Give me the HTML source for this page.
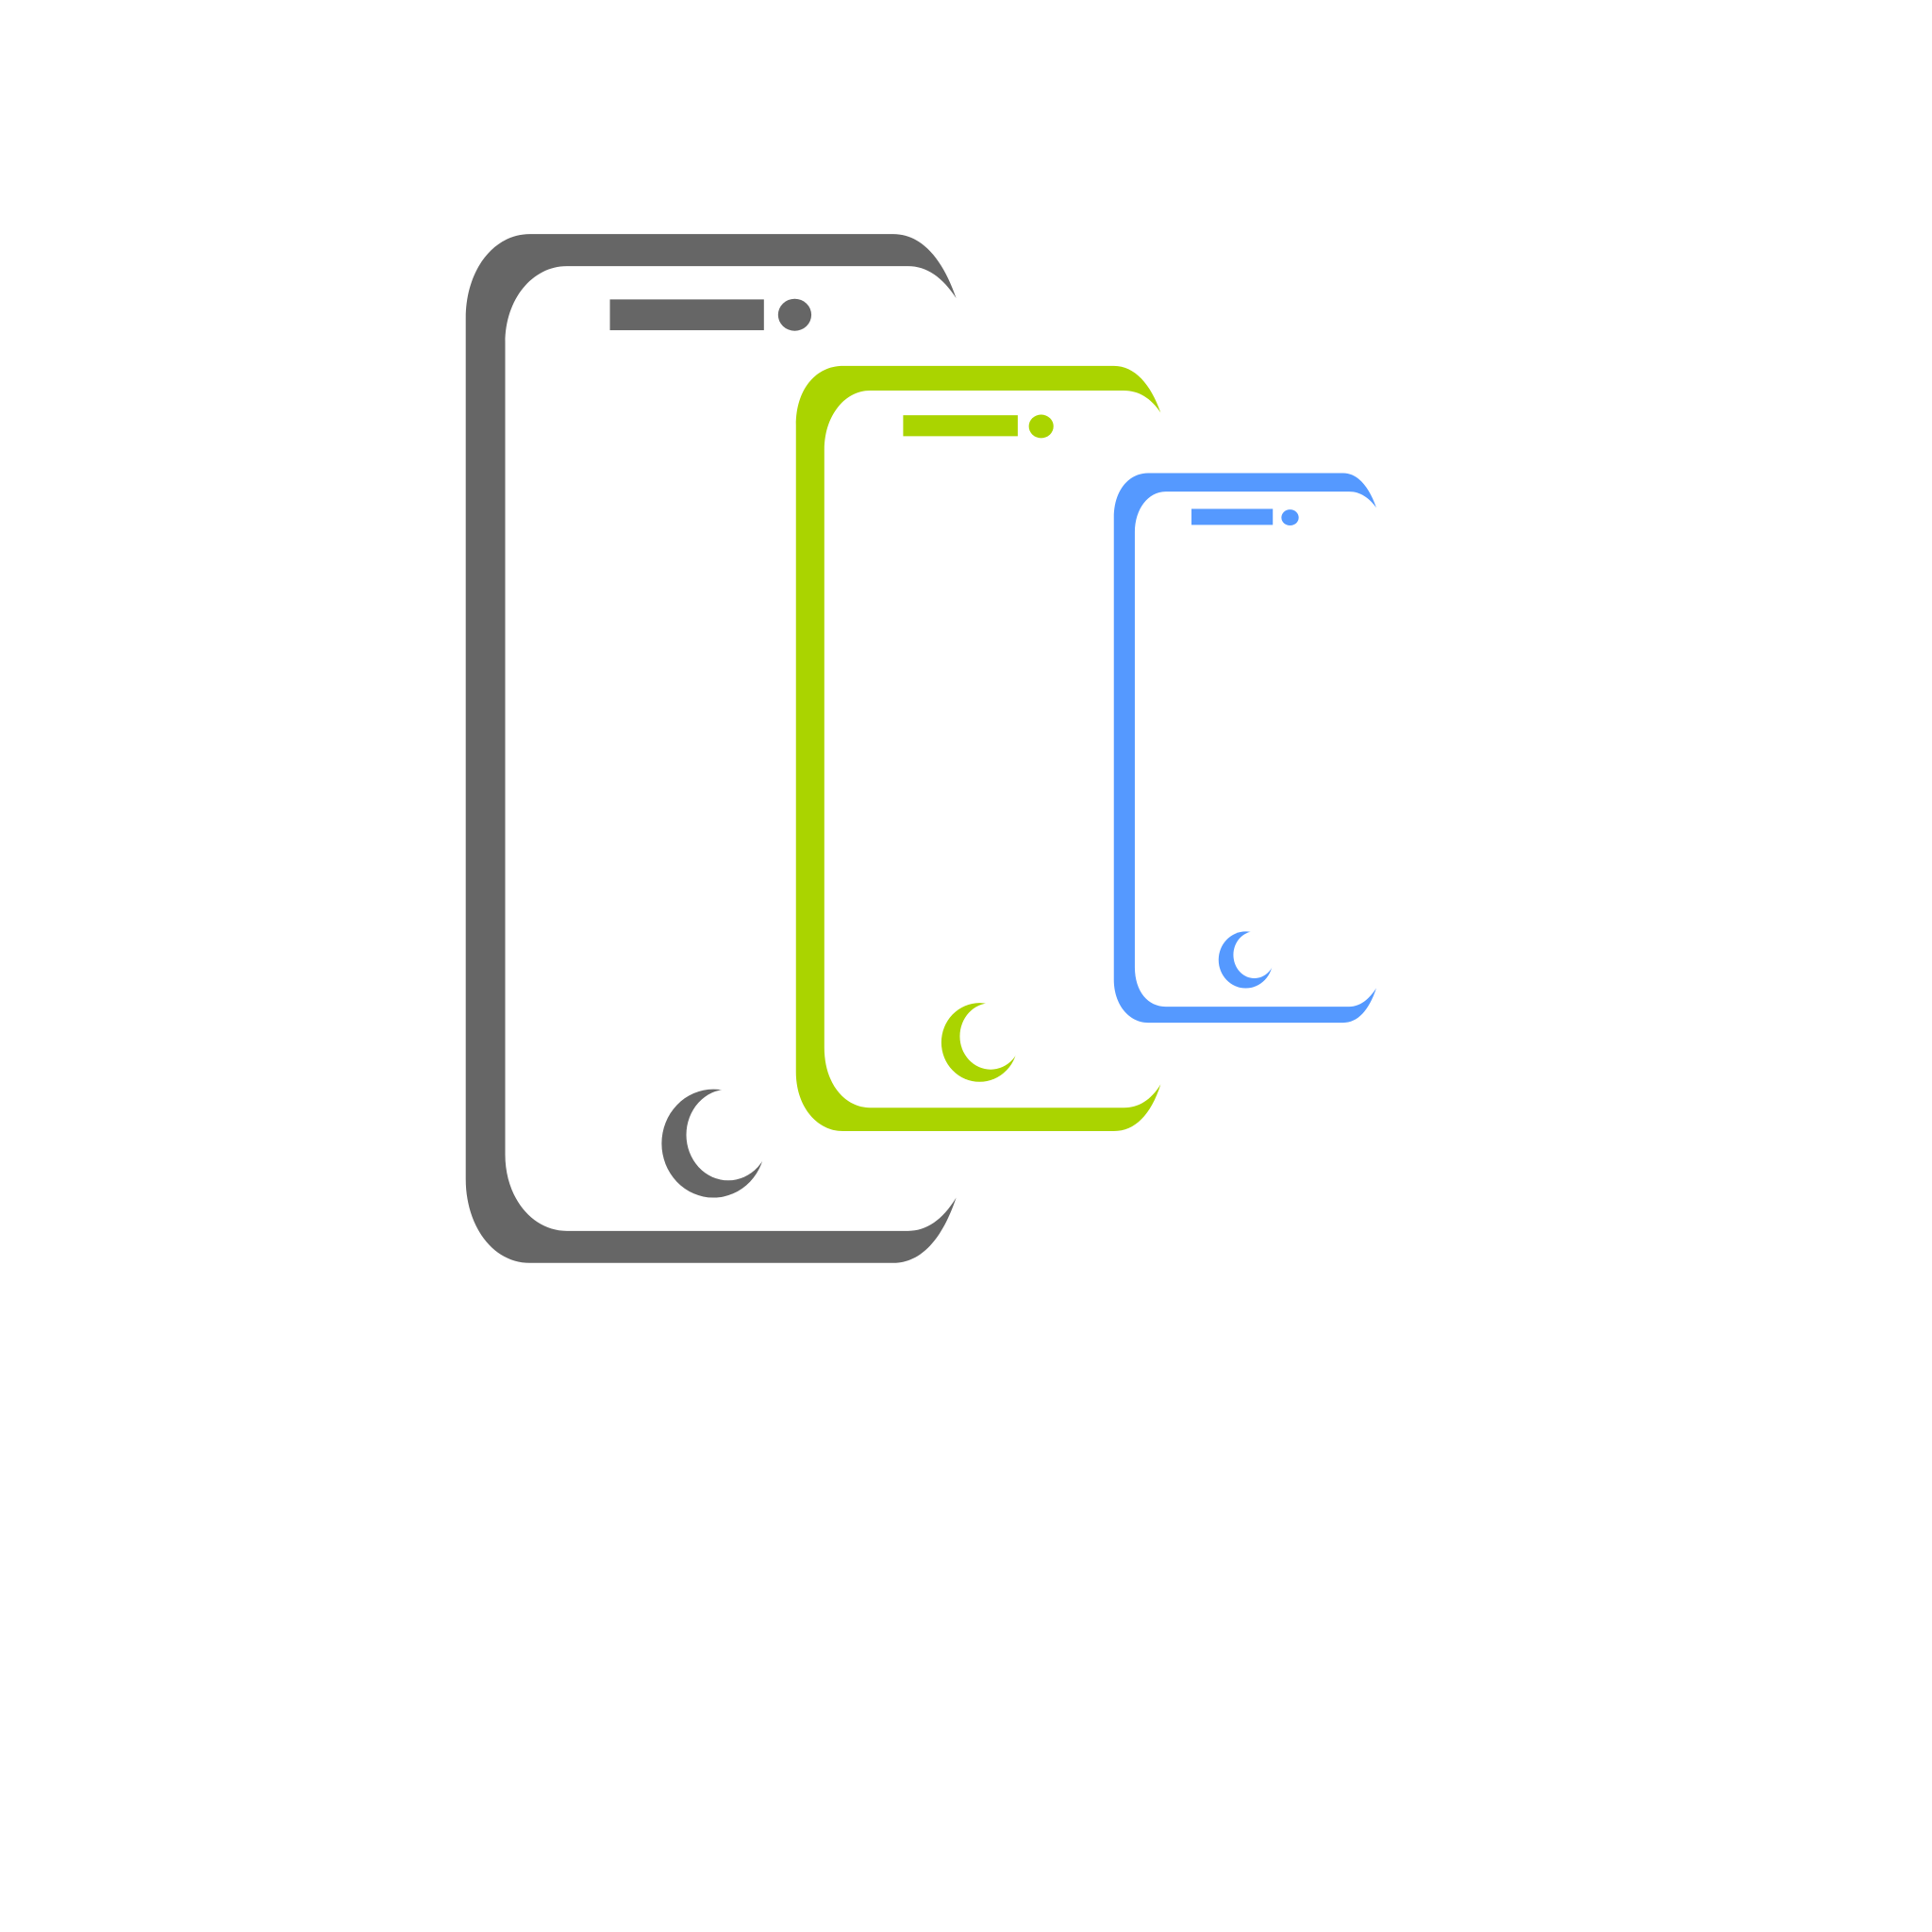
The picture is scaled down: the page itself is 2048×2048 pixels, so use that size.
<!DOCTYPE html>
<html><head><style>html,body{margin:0;padding:0;background:#fff;}svg{display:block}</style></head>
<body>
<svg width="2048" height="2048" viewBox="0 0 1568 1568" xmlns="http://www.w3.org/2000/svg">
<rect width="1568" height="1568" fill="#fff"/>
<!-- gray -->
<path fill="#666666" d="M776,242 C765,210 748,190 725,190 H430 C400,190 378,220 378,258 V957 C378,995 400,1025 430,1025 H725 C748,1025 765,1005 776,972 C765,990 752,999 737,999 H460 C432,999 410,972 410,937 V278 C410,243 432,216 460,216 H737 C752,216 765,225 776,242 Z"/>
<rect x="495" y="243" width="125" height="25" fill="#666666"/>
<ellipse cx="645" cy="255.5" rx="13.5" ry="13" fill="#666666"/>
<ellipse cx="579" cy="928" rx="42" ry="44" fill="#666666"/>
<ellipse cx="591" cy="921" rx="34" ry="37" fill="#fff"/>
<!-- green -->
<path fill="#aad400" d="M942,335 C934,312 921,297 904,297 H684 C663,297 646,315 646,345 V870 C646,898 663,918 684,918 H904 C921,918 934,905 942,880 C934,893 924,899 912,899 H706 C686,899 669,880 669,850 V365 C669,337 686,317 706,317 H912 C924,317 934,323 942,335 Z"/>
<rect x="733" y="337" width="93" height="17" fill="#aad400"/>
<ellipse cx="845" cy="346" rx="10" ry="9.5" fill="#aad400"/>
<ellipse cx="795" cy="846" rx="31" ry="32" fill="#aad400"/>
<ellipse cx="804" cy="841" rx="25" ry="27" fill="#fff"/>
<!-- blue -->
<path fill="#5599ff" d="M1117,412 C1111,395 1102,384 1090,384 H932 C916,384 904,398 904,420 V795 C904,815 916,830 932,830 H1090 C1102,830 1111,820 1117,802 C1111,811 1104,817 1095,817 H946 C932,817 921,805 921,785 V432 C921,413 932,399 946,399 H1095 C1104,399 1111,404 1117,412 Z"/>
<rect x="967" y="413" width="66" height="13" fill="#5599ff"/>
<ellipse cx="1047" cy="420" rx="7" ry="6.5" fill="#5599ff"/>
<ellipse cx="1011" cy="779" rx="22" ry="23" fill="#5599ff"/>
<ellipse cx="1018" cy="775" rx="17" ry="19" fill="#fff"/>
</svg>
</body></html>
